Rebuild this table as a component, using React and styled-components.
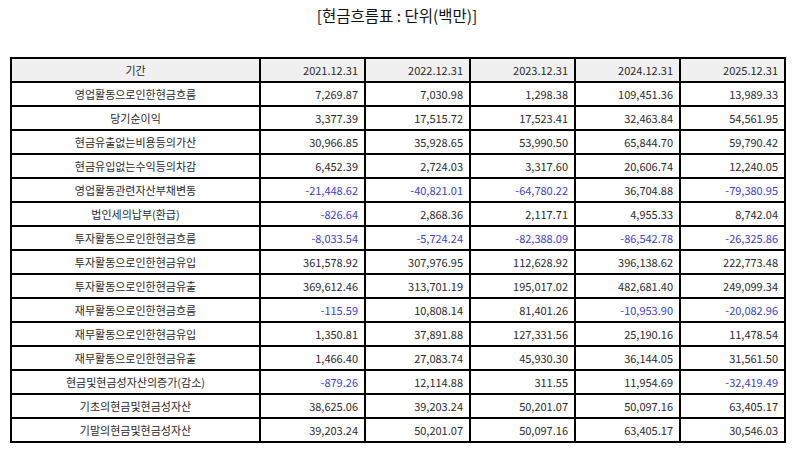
import styled, { createGlobalStyle } from "styled-components";

const GlobalStyle = createGlobalStyle`
  body {
    margin: 0;
    background: #fff;
    font-family: "Noto Sans CJK KR", "Noto Sans", sans-serif;
  }
`;

const Page = styled.div`
  width: 794px;
  height: 452px;
  padding: 0 10px;
  box-sizing: border-box;
`;

const Title = styled.h1`
  margin: 0;
  height: 57px;
  padding-top: 4px;
  box-sizing: border-box;
  text-align: center;
  font-size: 15.5px;
  font-weight: 400;
  color: #111;
`;

const Table = styled.table`
  width: 774px;
  border-collapse: collapse;
  table-layout: fixed;
  font-size: 11px;
  color: #2a2a2a;
`;

const Cell = styled.td`
  height: 22px;
  padding: 0 6px;
  border: 2px solid #000;
  text-align: ${(props) => (props.label ? "center" : "right")};
  color: ${(props) => (props.negative ? "#4040cc" : "#2a2a2a")};
  white-space: nowrap;
  line-height: 1;
`;

const HeadCell = styled(Cell).attrs({ as: "th" })`
  font-weight: 400;
  background-color: #f0f0f0;
`;

const periods = ["2021.12.31", "2022.12.31", "2023.12.31", "2024.12.31", "2025.12.31"];

const rows = [
  ["영업활동으로인한현금흐름", "7,269.87", "7,030.98", "1,298.38", "109,451.36", "13,989.33"],
  ["당기순이익", "3,377.39", "17,515.72", "17,523.41", "32,463.84", "54,561.95"],
  ["현금유출없는비용등의가산", "30,966.85", "35,928.65", "53,990.50", "65,844.70", "59,790.42"],
  ["현금유입없는수익등의차감", "6,452.39", "2,724.03", "3,317.60", "20,606.74", "12,240.05"],
  ["영업활동관련자산부채변동", "-21,448.62", "-40,821.01", "-64,780.22", "36,704.88", "-79,380.95"],
  ["법인세의납부(환급)", "-826.64", "2,868.36", "2,117.71", "4,955.33", "8,742.04"],
  ["투자활동으로인한현금흐름", "-8,033.54", "-5,724.24", "-82,388.09", "-86,542.78", "-26,325.86"],
  ["투자활동으로인한현금유입", "361,578.92", "307,976.95", "112,628.92", "396,138.62", "222,773.48"],
  ["투자활동으로인한현금유출", "369,612.46", "313,701.19", "195,017.02", "482,681.40", "249,099.34"],
  ["재무활동으로인한현금흐름", "-115.59", "10,808.14", "81,401.26", "-10,953.90", "-20,082.96"],
  ["재무활동으로인한현금유입", "1,350.81", "37,891.88", "127,331.56", "25,190.16", "11,478.54"],
  ["재무활동으로인한현금유출", "1,466.40", "27,083.74", "45,930.30", "36,144.05", "31,561.50"],
  ["현금및현금성자산의증가(감소)", "-879.26", "12,114.88", "311.55", "11,954.69", "-32,419.49"],
  ["기초의현금및현금성자산", "38,625.06", "39,203.24", "50,201.07", "50,097.16", "63,405.17"],
  ["기말의현금및현금성자산", "39,203.24", "50,201.07", "50,097.16", "63,405.17", "30,546.03"],
];

const App = () => {
  return (
    <Page>
      <GlobalStyle />
      <Title>[현금흐름표 : 단위(백만)]</Title>
      <Table>
        <colgroup>
          <col style={{ width: 249 }} />
          {periods.map((p) => (
            <col key={p} style={{ width: 105 }} />
          ))}
        </colgroup>
        <thead>
          <tr>
            <HeadCell label>기간</HeadCell>
            {periods.map((p) => (
              <HeadCell key={p}>{p}</HeadCell>
            ))}
          </tr>
        </thead>
        <tbody>
          {rows.map(([name, ...values]) => (
            <tr key={name}>
              <Cell label>{name}</Cell>
              {values.map((v, i) => (
                <Cell key={i} negative={v.startsWith("-")}>
                  {v}
                </Cell>
              ))}
            </tr>
          ))}
        </tbody>
      </Table>
    </Page>
  );
};

export default App;
